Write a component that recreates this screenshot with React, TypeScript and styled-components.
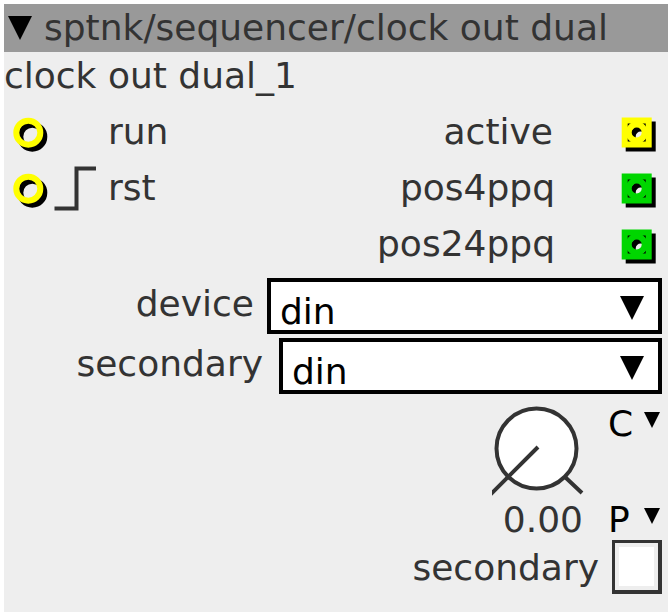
import React from "react";
import styled, { createGlobalStyle } from "styled-components";

const GlobalStyle = createGlobalStyle`
  * { box-sizing: border-box; }
  body { margin: 0; background: #fff; }
  body, button, select { font: 36px/48px "DejaVu Sans", sans-serif; color: #333; }
`;

const Patch = styled.main`
  margin: 4px;
  padding-bottom: 18px;
  background: #eee;
`;

const TitleBar = styled.header`
  display: flex;
  align-items: center;
  height: 48px;
  padding-left: 4px;
  gap: 12px;
  background: #999;
`;

const Title = styled.h1`
  margin: 0;
  font: inherit;
  white-space: nowrap;
`;

const PlainButton = styled.button`
  display: flex;
  align-items: center;
  padding: 0;
  border: 0;
  background: none;
  color: #000;
`;

const InstanceName = styled.div`
  height: 52px;
`;

const Ports = styled.div`
  display: flex;
  justify-content: space-between;
  padding-bottom: 6px;
`;

const PortColumn = styled.div`
  display: flex;
  flex-direction: column;
`;

const Inlet = styled.div`
  display: grid;
  grid-template-columns: 96px auto;
  align-items: center;
  column-gap: 8px;
  height: 56px;
`;

const Outlet = styled.div<{ $gap: number }>`
  display: flex;
  align-items: center;
  justify-content: flex-end;
  gap: ${(p) => p.$gap}px;
  height: 56px;
  padding-right: 12px;

  > svg { margin-top: 4px; }
`;

const Field = styled.div<{ $labelWidth: number; $gap: number }>`
  display: grid;
  grid-template-columns: ${(p) => p.$labelWidth}px 1fr;
  column-gap: ${(p) => p.$gap}px;
  height: 60px;
  padding-right: 6px;
`;

const FieldLabel = styled.label`
  padding-top: 2px;
  text-align: right;
  white-space: nowrap;
`;

const SelectBox = styled.div`
  display: grid;
  align-items: center;
  height: 56px;

  > * { grid-area: 1 / 1; }
  > svg { justify-self: end; margin: 4px 18px 0 0; pointer-events: none; }
`;

const Select = styled.select`
  appearance: none;
  width: 100%;
  height: 56px;
  padding: 6px 48px 0 9px;
  border: 4px solid #000;
  border-radius: 0;
  background: #fff;
  color: #000;
`;

const DialRow = styled.div`
  display: flex;
  justify-content: flex-end;
  gap: 24px;
  padding: 2px 8px 0 0;
`;

const DialColumn = styled.div`
  display: flex;
  flex-direction: column;
  align-items: flex-end;
`;

const DialValue = styled.output`
  padding-right: 1px;
`;

const DialButtons = styled.div`
  display: flex;
  flex-direction: column;
  justify-content: space-between;
`;

const DialButton = styled(PlainButton)`
  justify-content: space-between;
  width: 52px;

  > svg { margin-bottom: 8px; }
`;

const ToggleRow = styled.div`
  display: flex;
  justify-content: flex-end;
  gap: 13px;
  padding-right: 6px;
`;

const Toggle = styled.input`
  appearance: none;
  width: 50px;
  height: 54px;
  margin: -4px 0 0;
  border: solid #333;
  border-width: 3px 4px 4px 3px;
  background: #fff;
  box-shadow: inset 0 0 0 4px #eee;
`;

function Arrow({ size }: { size: number }) {
  return (
    <svg width={size} height={size} viewBox="0 0 24 24" aria-hidden="true">
      <path d="M0 0H24L12 24Z" fill="#000" />
    </svg>
  );
}

function InletIcon({ edge }: { edge?: boolean }) {
  return (
    <svg width="96" height="56" viewBox="0 0 96 56" aria-hidden="true">
      <circle cx="28.3" cy="32.7" r="12" fill="none" stroke="#000" strokeWidth="6" />
      <circle cx="24.3" cy="28.7" r="12" fill="none" stroke="#ff0" strokeWidth="6" />
      {edge && <path d="M50.5 48.5H72.5V8.5H92" fill="none" stroke="#333" strokeWidth="4" />}
    </svg>
  );
}

function OutletShape({ color }: { color: string }) {
  return (
    <g fill="none" stroke={color}>
      <rect x="3" y="3" width="24" height="24" strokeWidth="6" />
      <circle cx="15" cy="15" r="8" strokeWidth="6" />
    </g>
  );
}

function OutletIcon({ color }: { color: string }) {
  return (
    <svg width="34" height="34" viewBox="0.3 -0.5 34 34" overflow="visible" aria-hidden="true">
      <g transform="translate(4 4)"><OutletShape color="#000" /></g>
      <OutletShape color={color} />
    </svg>
  );
}

function Dial() {
  return (
    <svg width="92" height="96" viewBox="0 0 92 96" role="img" aria-label="dial">
      <circle cx="44.5" cy="48.5" r="40" fill="#fff" stroke="#333" strokeWidth="4" />
      <path d="M46 47L-2 95M73 77L90 93" stroke="#333" strokeWidth="4" />
    </svg>
  );
}

const outlets = [
  { name: "active", color: "#ff0", gap: 69 },
  { name: "pos4ppq", color: "#00d600", gap: 67 },
  { name: "pos24ppq", color: "#00d600", gap: 67 },
];

const fields = [
  { id: "device", labelWidth: 250, gap: 13 },
  { id: "secondary", labelWidth: 259, gap: 16 },
];

export default function App() {
  return (
    <>
      <GlobalStyle />
      <Patch>
        <TitleBar>
          <PlainButton aria-label="Object menu"><Arrow size={24} /></PlainButton>
          <Title>sptnk/sequencer/clock out dual</Title>
        </TitleBar>
        <InstanceName>clock out dual_1</InstanceName>
        <Ports>
          <PortColumn>
            <Inlet><InletIcon /><span>run</span></Inlet>
            <Inlet><InletIcon edge /><span>rst</span></Inlet>
          </PortColumn>
          <PortColumn>
            {outlets.map((o) => (
              <Outlet key={o.name} $gap={o.gap}>
                <span>{o.name}</span>
                <OutletIcon color={o.color} />
              </Outlet>
            ))}
          </PortColumn>
        </Ports>
        {fields.map((f) => (
          <Field key={f.id} $labelWidth={f.labelWidth} $gap={f.gap}>
            <FieldLabel htmlFor={f.id}>{f.id}</FieldLabel>
            <SelectBox>
              <Select id={f.id} defaultValue="din"><option>din</option></Select>
              <Arrow size={24} />
            </SelectBox>
          </Field>
        ))}
        <DialRow>
          <DialColumn>
            <Dial />
            <DialValue>0.00</DialValue>
          </DialColumn>
          <DialButtons>
            <DialButton aria-label="C"><span>C</span><Arrow size={16} /></DialButton>
            <DialButton aria-label="P"><span>P</span><Arrow size={16} /></DialButton>
          </DialButtons>
        </DialRow>
        <ToggleRow>
          <label htmlFor="secondary-toggle">secondary</label>
          <Toggle id="secondary-toggle" type="checkbox" />
        </ToggleRow>
      </Patch>
    </>
  );
}
